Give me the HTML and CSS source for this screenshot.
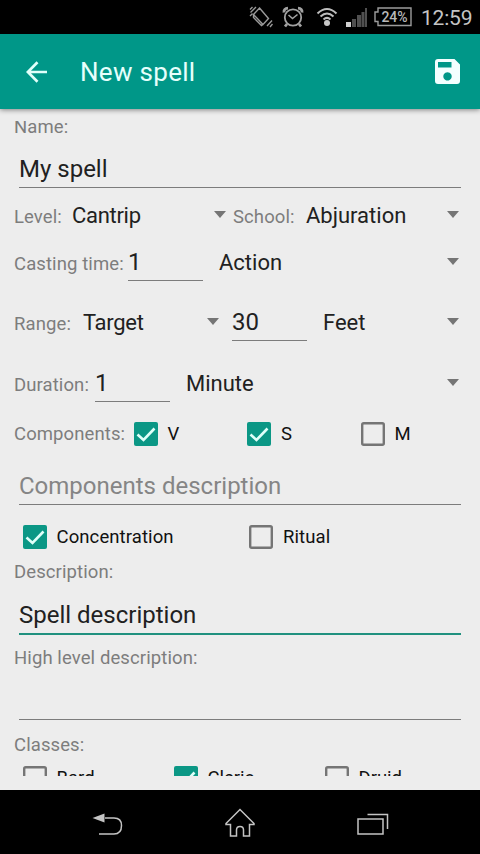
FILE: index.html
```html
<!DOCTYPE html>
<html lang="en">
<head>
<meta charset="utf-8">
<title>New spell</title>
<link rel="stylesheet" href="styles.css">
</head>
<body>
<header class="status">
  <svg class="s-vibrate" width="24" height="24" viewBox="0 0 24 24" fill="none" stroke="#9a9a9a" stroke-width="1.4"><path d="M10.500 3L19.500 13.500L14 19.500L4.500 9.500ZM4.500 9.500V12.500L12.500 20.500L14 19.500M1.500 7.500L7 2M1 11L3.500 8.500M23 15.500L18 21M23.500 19L21 22M1 4.500L3.500 2"/></svg>
  <svg class="s-alarm" width="22" height="22" viewBox="0 0 22 22" fill="none" stroke="#a2a2a2" stroke-width="1.8"><circle cx="11" cy="11.500" r="8.200"/><path d="M6.500 9L10.500 12.500L15.500 8.500" stroke-width="1.600"/><path d="M2 6.500Q1.500 2.500 6 2.200M20 6.500Q20.500 2.500 16 2.200M5 18L3 20.500M17 18L19 20.500" stroke-width="2.800"/></svg>
  <svg class="s-wifi" width="22" height="20" viewBox="0 0 22 20" fill="none" stroke="#bdbdbd" stroke-width="2"><path d="M1.500 6.500Q11-2.500 20.500 6.500M4.500 9.500Q11 3.500 17.500 9.500M7.500 12.500Q11 9.300 14.500 12.500"/><circle cx="11" cy="16" r="3" fill="#c8c8c8" stroke="none"/></svg>
  <svg class="s-signal" width="22" height="19" viewBox="0 0 22 19"><path fill="#d0d0d0" d="M0 14h5v5H0z"/><path fill="#505050" d="M6 11h4v8H6zM11 7h4v12h-4zM15.500 4h3v15h-3zM19 0h2v19H19z"/></svg>
  <div class="battery"><svg width="38" height="20" viewBox="0 0 38 20" fill="none" stroke="#9c9c9c" stroke-width="1.400"><path d="M4 1H37V18.500H4V14.500H1V5H4Z"/></svg><span>24%</span></div>
  <span class="clock">12:59</span>
</header>
<header class="toolbar">
  <svg class="back" width="22" height="22" viewBox="0 0 22 22" fill="none" stroke="#e0fffa" stroke-width="2.700"><path d="M21 11H2M11.500 1.300L1.800 11L11.500 20.700"/></svg>
  <h1 class="title">New spell</h1>
  <svg class="save" width="25" height="25" viewBox="0 0 25 25" fill="#f4ffff"><path fill-rule="evenodd" d="M3 0H19.500L25 5.500V22Q25 25 22 25H3Q0 25 0 22V3Q0 0 3 0ZM3 3V8.500H16.500V3ZM12.500 13.200a4.200 4.200 0 1 0 .01 0Z"/></svg>
</header>
<main class="page">
  <form class="form">
    <div class="label-row first">Name:</div>
    <div class="field name">My spell</div>

    <div class="row level">
      <span class="label">Level:</span>
      <div class="spinner tight w-level"><span>Cantrip</span><i class="caret"></i></div>
      <span class="label school">School:</span>
      <div class="spinner grow"><span>Abjuration</span><i class="caret"></i></div>
    </div>
    <div class="row casting">
      <span class="label">Casting time:</span>
      <span class="num">1</span>
      <div class="spinner grow unit"><span>Action</span><i class="caret"></i></div>
    </div>
    <div class="row range">
      <span class="label">Range:</span>
      <div class="spinner tight w-range"><span>Target</span><i class="caret"></i></div>
      <span class="num">30</span>
      <div class="spinner grow unit"><span>Feet</span><i class="caret"></i></div>
    </div>
    <div class="row duration">
      <span class="label">Duration:</span>
      <span class="num">1</span>
      <div class="spinner grow unit"><span>Minute</span><i class="caret"></i></div>
    </div>

    <div class="checks components">
      <span class="label">Components:</span>
      <div class="check"><svg class="box" viewBox="0 0 24 24"><rect class="on" width="24" height="24" rx="2"/><path class="tick" d="M3.500 12.500L9.500 18L20.500 6.500"/></svg>V</div>
      <div class="check"><svg class="box" viewBox="0 0 24 24"><rect class="on" width="24" height="24" rx="2"/><path class="tick" d="M3.500 12.500L9.500 18L20.500 6.500"/></svg>S</div>
      <div class="check"><svg class="box" viewBox="0 0 24 24"><rect class="off" x="1.200" y="1.200" width="21.600" height="21.600" rx="1.500"/></svg>M</div>
    </div>
    <div class="field comp-desc">Components description</div>
    <div class="checks flags">
      <div class="check"><svg class="box" viewBox="0 0 24 24"><rect class="on" width="24" height="24" rx="2"/><path class="tick" d="M3.500 12.500L9.500 18L20.500 6.500"/></svg>Concentration</div>
      <div class="check"><svg class="box" viewBox="0 0 24 24"><rect class="off" x="1.200" y="1.200" width="21.600" height="21.600" rx="1.500"/></svg>Ritual</div>
    </div>

    <div class="label-row">Description:</div>
    <div class="field desc focused">Spell description</div>
    <div class="label-row high">High level description:</div>
    <div class="field empty"></div>
    <div class="label-row classes-label">Classes:</div>
    <div class="checks classes">
      <div class="check"><svg class="box" viewBox="0 0 24 24"><rect class="off" x="1.200" y="1.200" width="21.600" height="21.600" rx="1.500"/></svg>Bard</div>
      <div class="check"><svg class="box" viewBox="0 0 24 24"><rect class="on" width="24" height="24" rx="2"/><path class="tick" d="M3.500 12.500L9.500 18L20.500 6.500"/></svg>Cleric</div>
      <div class="check"><svg class="box" viewBox="0 0 24 24"><rect class="off" x="1.200" y="1.200" width="21.600" height="21.600" rx="1.500"/></svg>Druid</div>
    </div>
  </form>
</main>
<nav class="navbar">
  <svg width="32" height="24" viewBox="0 0 32 24" fill="none" stroke="#c4c4c4" stroke-width="1.500"><path d="M13 6H22Q29.500 6 29.500 13.500Q29.500 22 22 22H7"/><path d="M0.500 6L12.500 1.500V10.500Z" fill="#c4c4c4" stroke="none"/></svg>
  <svg width="32" height="30" viewBox="0 0 32 30" fill="none" stroke="#c4c4c4" stroke-width="1.500"><path d="M16 1.500L2 15.500V16.500H6.500V28H12.500V22Q12.500 18.500 16 18.500Q19.500 18.500 19.500 22V28H25.500V16.500H30V15.500Z"/></svg>
  <svg width="32" height="22" viewBox="0 0 32 22" fill="none" stroke="#c4c4c4" stroke-width="1.500"><path d="M1 6H26V21H1ZM10.500 1.500H30.500V16"/></svg>
</nav>
</body>
</html>
```
FILE: styles.css
```css
* { box-sizing: border-box; }
body {
  margin: 0;
  width: 480px;
  height: 854px;
  display: flex;
  flex-direction: column;
  overflow: hidden;
  background: #000;
  color: #212121;
  font-family: Roboto, "Liberation Sans", sans-serif;
}
svg { display: block; flex: none; }

.status {
  height: 34px;
  flex: none;
  display: flex;
  align-items: center;
  padding-left: 249px;
  background: #000;
}
.s-alarm { margin-left: 9px; }
.s-wifi { margin-left: 12px; }
.s-signal { margin-left: 8px; }
.battery { display: grid; margin-left: 6px; place-items: center; }
.battery > * { grid-area: 1 / 1; }
.battery span { padding-left: 3px; font-size: 14px; font-weight: 500; line-height: 20px; color: #b8b8b8; }
.clock { margin: 2px 0 0 9px; font-size: 21px; letter-spacing: -.2px; color: #c4c4c4; white-space: nowrap; }

.toolbar {
  height: 75px;
  flex: none;
  display: flex;
  align-items: center;
  padding: 0 20px 0 26px;
  background: #009788;
  box-shadow: 0 1px 5px rgba(0, 0, 0, .45);
  z-index: 1;
}
.title {
  flex: 1;
  margin: 0 0 0 32px;
  font-size: 26px;
  letter-spacing: .3px;
  font-weight: 400;
  line-height: 36px;
  color: #e6fffc;
}

.page {
  height: 681px;
  flex: none;
  padding: 12px 0 14px;
  background: #ededed;
}
.form {
  height: 655px;
  overflow: hidden;
  padding: 0 19px 0 14px;
  white-space: nowrap;
}
.label-row, .label { font-size: 18.500px; letter-spacing: .1px; color: #7d7d7d; }
.label-row { height: 21px; line-height: 21px; }
.first { margin-top: -4px; }
.high { margin-top: 13px; }
.classes-label { margin-top: 15px; }

.field {
  margin-left: 5px;
  line-height: 35px;
  font-size: 24px;
  border-bottom: 1px solid #7c7c7c;
}
.name { height: 50px; padding-top: 14px; }
.comp-desc { height: 46px; padding-top: 10px; color: #858585; }
.desc { height: 52px; padding-top: 15px; }
.focused { border-bottom: 2px solid #20917f; }
.empty { height: 51px; }

.row { display: flex; align-items: baseline; line-height: 35px; }
.level { height: 50px; padding-top: 10px; }
.casting { height: 50px; padding-top: 7px; }
.range { height: 60px; padding-top: 17px; }
.duration { height: 61px; padding-top: 18px; }
.level .label { width: 58px; }
.level .school { width: 73px; margin-left: 7px; }
.casting .label { width: 114px; }
.range .label { width: 69px; }
.duration .label { width: 81px; }
.w-level { width: 154px; }
.w-range { width: 136px; margin-right: 13px; }
.grow { flex: 1; padding-right: 2px; }
.unit { margin-left: 16px; }
.spinner { display: flex; align-items: center; justify-content: space-between; font-size: 22px; }
.tight { letter-spacing: -.3px; }
.caret {
  width: 12px;
  height: 7px;
  margin-bottom: 2px;
  background: #757575;
  clip-path: polygon(0 0, 100% 0, 50% 100%);
}
.num { width: 75px; font-size: 24px; border-bottom: 1px solid #7c7c7c; }

.checks { display: grid; align-items: center; font-size: 18.500px; color: #111; }
.check { display: flex; align-items: center; gap: 10px; }
.box { width: 24px; height: 24px; }
.on { fill: #0b9785; }
.tick { fill: none; stroke: #dffff9; stroke-width: 2.600px; }
.off { fill: none; stroke: #757575; stroke-width: 2.400px; }
.components { height: 50px; grid-template-columns: 119.500px 113.500px 113.500px 1fr; }
.flags { height: 50px; margin: 7px 0 0 8.500px; letter-spacing: .1px; grid-template-columns: 226.500px 1fr; }
.classes { height: 44px; margin-left: 8.500px; grid-template-columns: 151px 151px 1fr; }

.navbar {
  height: 64px;
  flex: none;
  display: flex;
  justify-content: space-between;
  align-items: center;
  padding: 4px 91px 0 92px;
  background: #000;
}
.navbar svg:nth-child(2) { margin-right: 2px; margin-bottom: 3px; }
```
